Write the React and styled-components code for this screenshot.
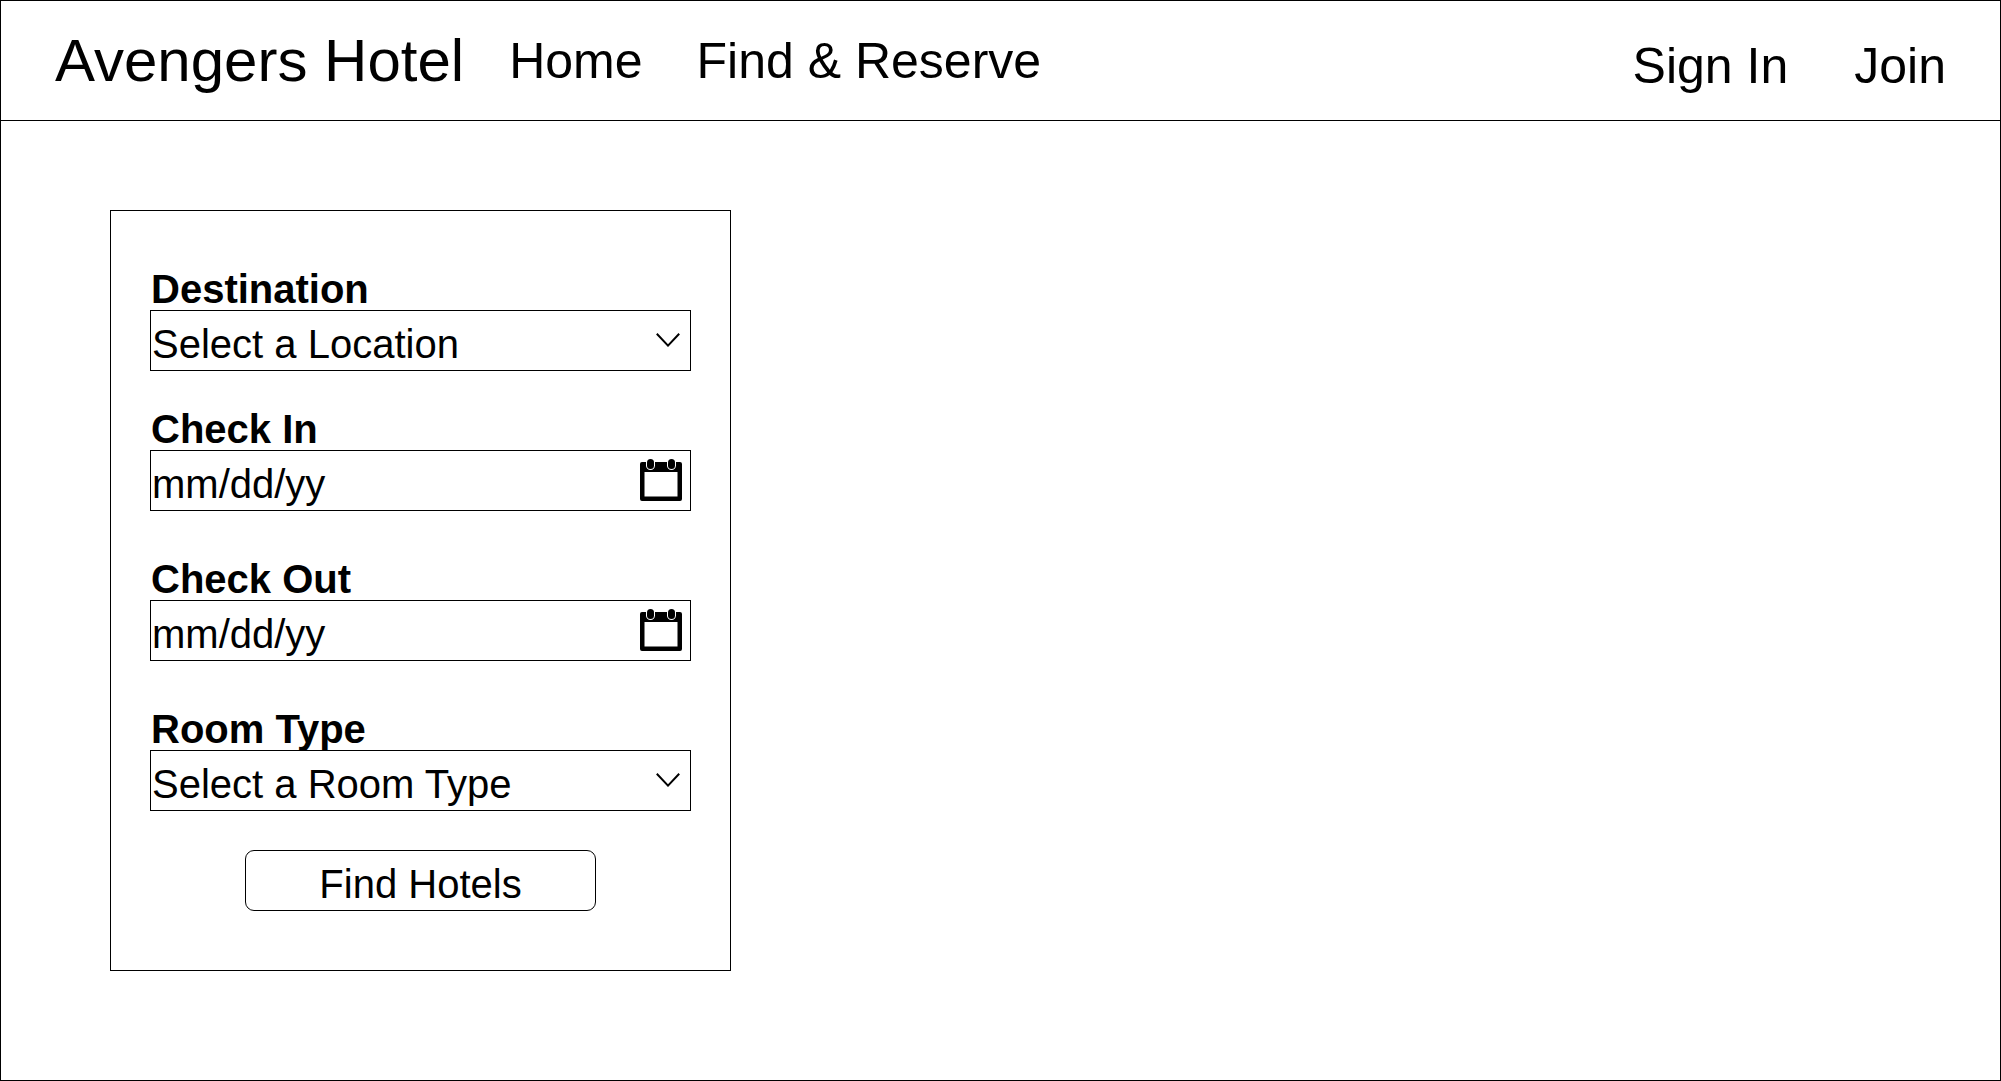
import React from "react";
import styled, { createGlobalStyle, css } from "styled-components";

const GlobalStyle = createGlobalStyle`
  *, *::before, *::after { box-sizing: border-box; }
  body {
    margin: 0;
    background: #fff;
    color: #000;
    font-family: "Liberation Sans", Arial, Helvetica, sans-serif;
  }
`;

const Page = styled.div`
  min-height: 100vh;
  border: 1px solid #000;
`;

const Header = styled.header`
  display: flex;
  flex-wrap: wrap;
  align-items: center;
  column-gap: 45px;
  min-height: 120px;
  padding: 0 54px;
  border-bottom: 1px solid #000;
`;

const Brand = styled.a`
  font-size: 60px;
  line-height: 60px;
  color: inherit;
  text-decoration: none;
`;

const Nav = styled.nav`
  display: flex;
  flex-wrap: wrap;
  column-gap: 54px;
`;

const AccountNav = styled(Nav)`
  column-gap: 66px;
  margin-left: auto;
  padding-top: 10px;
`;

const NavLink = styled.a`
  font-size: 50px;
  line-height: 50px;
  color: inherit;
  text-decoration: none;
`;

const Main = styled.main`
  padding: 89px 109px;
`;

const SearchCard = styled.form`
  display: flex;
  flex-direction: column;
  width: 100%;
  max-width: 621px;
  padding: 57px 39px 59px;
  border: 1px solid #000;
`;

const Field = styled.div`
  display: flex;
  flex-direction: column;
  margin-bottom: ${(p) => (p.$spacious ? 47 : 37)}px;
`;

const Label = styled.label`
  padding-left: 1px;
  font-size: 40px;
  line-height: 42px;
  font-weight: 700;
`;

const ControlBox = styled.div`
  display: grid;
  align-items: center;

  > * {
    grid-area: 1 / 1;
  }

  > svg {
    justify-self: end;
    margin: 0 ${(p) => p.$inset}px 2px 0;
    pointer-events: none;
  }
`;

const control = css`
  height: 61px;
  margin: 0;
  border: 1px solid #000;
  background: #fff;
  color: #000;
  font-family: inherit;
  font-size: 40px;
`;

const fieldControl = css`
  ${control}
  width: 100%;
  min-width: 0;
  border-radius: 0;
  appearance: none;
`;

const Select = styled.select`
  ${fieldControl}
  padding: 6px 60px 0 1px;
`;

const DateInput = styled.input`
  ${fieldControl}
  padding: 8px 60px 0 1px;

  &::placeholder {
    color: #000;
    opacity: 1;
  }
`;

const SubmitButton = styled.button`
  ${control}
  align-self: center;
  width: 100%;
  max-width: 351px;
  margin-top: 2px;
  padding: 8px 0 0;
  border-radius: 9px;
`;

function ChevronIcon() {
  return (
    <svg width="24" height="14" viewBox="0 0 24 14" aria-hidden="true">
      <path d="M0.8 0.8L12 12.6L23.2 0.8" fill="none" stroke="#000" strokeWidth="2" />
    </svg>
  );
}

function CalendarIcon() {
  return (
    <svg width="42" height="42" viewBox="0 0 42 42" aria-hidden="true">
      <path
        fillRule="evenodd"
        d="M2 3H40Q42 3 42 5V40Q42 42 40 42H2Q0 42 0 40V5Q0 3 2 3ZM4.5 13V37.5H37.5V13Z"
      />
      <rect x="6" y="-1.5" width="9" height="12.5" rx="4.5" fill="#fff" />
      <rect x="27" y="-1.5" width="9" height="12.5" rx="4.5" fill="#fff" />
      <rect x="7" y="0" width="7" height="10" rx="3.5" />
      <rect x="28" y="0" width="7" height="10" rx="3.5" />
    </svg>
  );
}

function SelectField({ id, label, prompt, options }) {
  return (
    <Field>
      <Label htmlFor={id}>{label}</Label>
      <ControlBox $inset={11}>
        <Select id={id} name={id} defaultValue="">
          <option value="">{prompt}</option>
          {options}
        </Select>
        <ChevronIcon />
      </ControlBox>
    </Field>
  );
}

function DateField({ id, label }) {
  return (
    <Field $spacious>
      <Label htmlFor={id}>{label}</Label>
      <ControlBox $inset={9}>
        <DateInput id={id} name={id} type="text" placeholder="mm/dd/yy" />
        <CalendarIcon />
      </ControlBox>
    </Field>
  );
}

export default function App() {
  return (
    <>
      <GlobalStyle />
      <Page>
        <Header>
          <Brand href="#home">Avengers Hotel</Brand>
          <Nav aria-label="Main">
            <NavLink href="#home">Home</NavLink>
            <NavLink href="#find">Find &amp; Reserve</NavLink>
          </Nav>
          <AccountNav aria-label="Account">
            <NavLink href="#sign-in">Sign In</NavLink>
            <NavLink href="#join">Join</NavLink>
          </AccountNav>
        </Header>
        <Main>
          <SearchCard onSubmit={(e) => e.preventDefault()}>
            <SelectField id="destination" label="Destination" prompt="Select a Location" />
            <DateField id="check-in" label="Check In" />
            <DateField id="check-out" label="Check Out" />
            <SelectField id="room-type" label="Room Type" prompt="Select a Room Type" />
            <SubmitButton type="submit">Find Hotels</SubmitButton>
          </SearchCard>
        </Main>
      </Page>
    </>
  );
}
